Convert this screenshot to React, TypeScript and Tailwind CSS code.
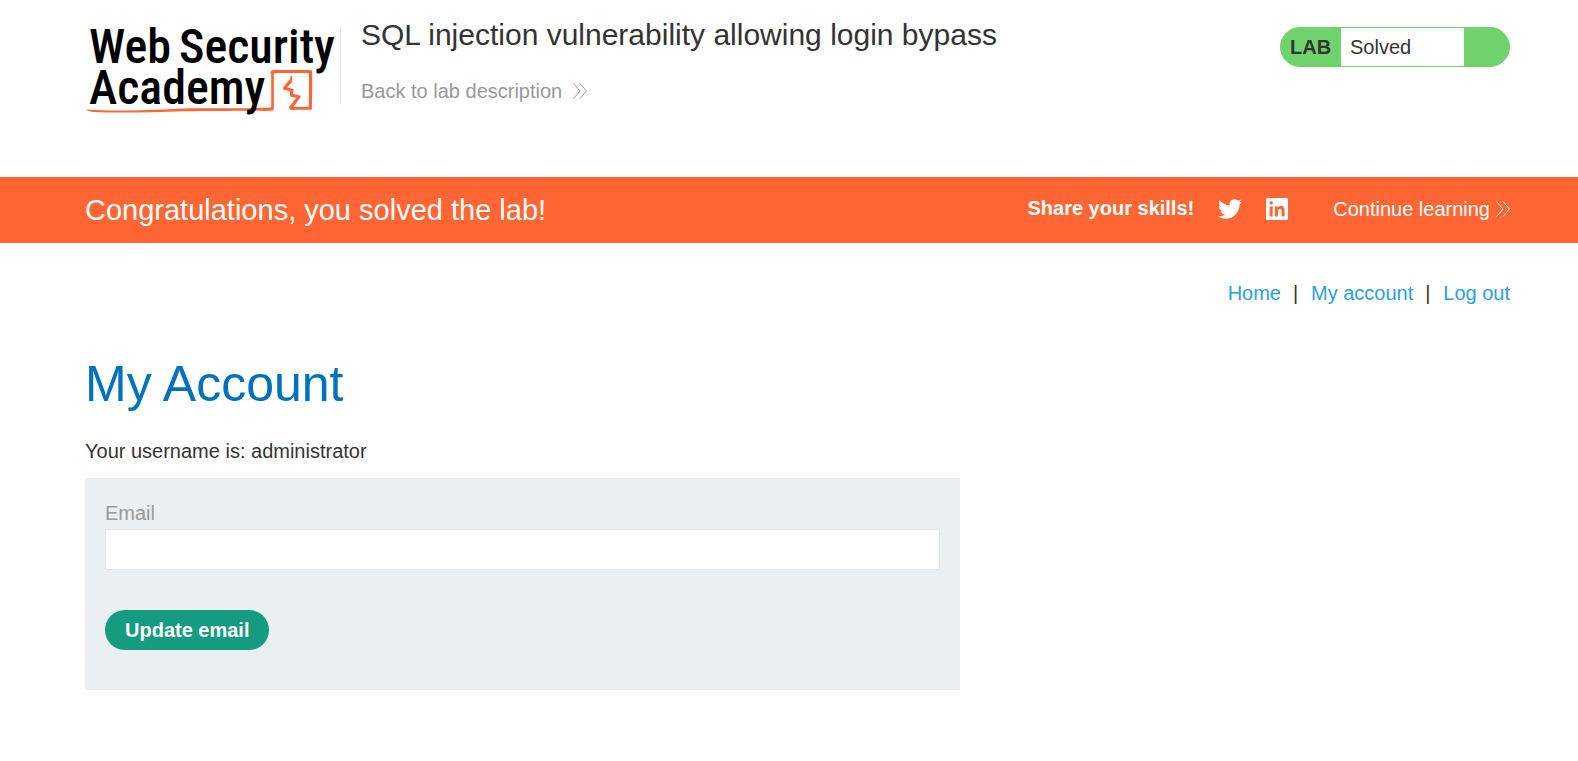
import React from "react";

function Logo() {
  return (
    <svg
      viewBox="0 0 251 92"
      className="h-[92px] w-[251px] shrink-0 overflow-visible"
      role="img"
      aria-label="Web Security Academy"
    >
      <g fill="none" stroke="#ff6633" strokeLinecap="round" strokeLinejoin="round">
        <path d="M175 82.500C184 82.300 183 81.900 185.500 82L185.500 45" strokeWidth="2.600" />
        <path d="M185 45.500C186 44 189 44.500 195 44.500L223.500 44.500C224 55 223.500 68 223.300 81.300" strokeWidth="3.200" />
        <path d="M204 81.500C210 80.800 216 82 223 81" strokeWidth="2.800" />
        <path d="M203.500 54L197.500 61.300L205 63.200L204.300 68.300L212 69.700L203.800 80.500" strokeWidth="3.200" />
        <path d="M204.300 50L203.700 55" strokeWidth="2" />
      </g>
      <path
        fill="#ff6633"
        d="M-1 82.500C28 84.800 60 83 92 81.700C118 80.800 145 82 186 80.500L186 83.500C150 84 122 83.600 96 84.300C64 85.500 28 86 6 85C3 84.400 0 83.600 -1 82.500Z"
      />
      <g fill="#000" className="font-['Roboto_Condensed','Roboto',sans-serif] text-[48px] font-medium">
        <text x="2" y="36">Web</text>
        <text x="92" y="36">Security</text>
        <text x="2" y="77">Academy</text>
      </g>
    </svg>
  );
}

function DoubleChevron() {
  return (
    <svg viewBox="0 0 14 16" className="h-4 w-[14px] shrink-0" fill="none" stroke="currentColor" aria-hidden="true">
      <path d="M0.500 0.500L7 8L0.500 15.500M7 0.500L13.500 8L7 15.500" />
    </svg>
  );
}

function TwitterIcon() {
  return (
    <svg viewBox="0 0 24 24" className="size-6" fill="currentColor" aria-hidden="true">
      <path d="M23.953 4.57a10 10 0 01-2.825.775 4.958 4.958 0 002.163-2.723c-.951.555-2.005.959-3.127 1.184a4.92 4.92 0 00-8.384 4.482C7.69 8.095 4.067 6.13 1.64 3.162a4.822 4.822 0 00-.666 2.475c0 1.71.87 3.213 2.188 4.096a4.904 4.904 0 01-2.228-.616v.06a4.923 4.923 0 003.946 4.827 4.996 4.996 0 01-2.212.085 4.936 4.936 0 004.604 3.417 9.867 9.867 0 01-6.102 2.105c-.39 0-.779-.023-1.17-.067a13.995 13.995 0 007.557 2.209c9.053 0 13.998-7.496 13.998-13.985 0-.21 0-.42-.015-.63A9.935 9.935 0 0024 4.59z" />
    </svg>
  );
}

function LinkedInIcon() {
  return (
    <svg viewBox="0 0 22 22" className="size-[22px]" aria-hidden="true">
      <rect width="22" height="22" rx="1.500" fill="#fff" />
      <g fill="#ff6633">
        <circle cx="5.200" cy="5" r="1.800" />
        <path d="M3.700 8.400H6.700V18.500H3.700zM8.900 8.400H11.800V9.800C12.400 8.800 13.400 8.100 14.800 8.100C17.900 8.100 18.600 10.100 18.600 13V18.500H15.600V13.600C15.600 12.200 15.400 10.900 13.900 10.900C12.300 10.900 11.900 12.200 11.900 13.500V18.500H8.900z" />
      </g>
    </svg>
  );
}

export default function App() {
  return (
    <div className="bg-white font-['Liberation_Sans',Arial,sans-serif] text-xl leading-6 text-[#333332]">
      <header className="flex h-[177px] items-start pr-[68px] pl-[87px] pt-[27px]">
        <Logo />
        <div className="ml-[2px] h-[78px] w-px shrink-0 bg-[#e4e4e4]" />
        <div className="-mt-[10px] ml-5 flex grow flex-col items-start gap-[26px]">
          <h1 className="text-[30px] leading-9">SQL injection vulnerability allowing login bypass</h1>
          <a href="#description" className="flex items-center gap-[11px] text-[#999]">
            Back to lab description
            <DoubleChevron />
          </a>
        </div>
        <div className="flex h-10 w-[230px] shrink-0 items-stretch overflow-hidden rounded-full border border-[#70d26d] bg-[#70d26d]">
          <span className="flex w-[60px] items-center pl-[9px] font-bold">LAB</span>
          <span className="flex w-[123px] items-center bg-white pl-[9px]">Solved</span>
        </div>
      </header>

      <section className="flex h-[66px] items-center justify-between bg-[#ff6633] pr-[68px] pl-[85px] text-white">
        <p className="text-[29px] leading-9">Congratulations, you solved the lab!</p>
        <div className="flex items-center pb-0.5">
          <span className="pb-0.5 font-bold">Share your skills!</span>
          <a href="#twitter" aria-label="Share on Twitter" className="ml-6"><TwitterIcon /></a>
          <a href="#linkedin" aria-label="Share on LinkedIn" className="ml-6"><LinkedInIcon /></a>
          <a href="#continue" className="ml-[45px] flex items-center gap-1.5">
            Continue learning
            <DoubleChevron />
          </a>
        </div>
      </section>

      <main className="pr-[68px] pl-[85px] pt-[38px]">
        <nav className="flex justify-end gap-3">
          <a href="#home" className="text-[#29a0e1]">Home</a>
          <span className="w-1.5">|</span>
          <a href="#account" className="text-[#29a0e1]">My account</a>
          <span className="w-1.5">|</span>
          <a href="#logout" className="text-[#29a0e1]">Log out</a>
        </nav>
        <h2 className="mt-[50px] text-[50px] leading-[58px] text-[#0071bc]">My Account</h2>
        <p className="mt-[26px]">Your username is: administrator</p>
        <form className="mt-[15px] max-w-[875px] bg-[#eaeff2] px-5 pt-[23px] pb-10" onSubmit={(e) => e.preventDefault()}>
          <label htmlFor="email" className="block text-[#999]">Email</label>
          <input id="email" type="email" className="mt-1 block h-[41px] w-full border border-[#e4e4e4] bg-white px-2 outline-none" />
          <button type="submit" className="mt-10 h-10 rounded-full bg-[#159b80] px-5 font-bold text-white">Update email</button>
        </form>
      </main>
    </div>
  );
}
